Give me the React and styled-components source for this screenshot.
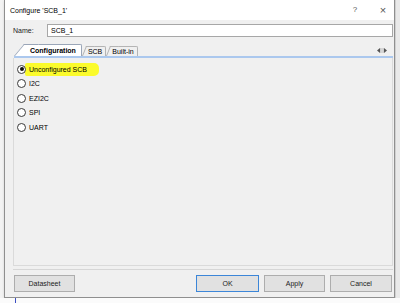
import React from 'react';
import styled, { createGlobalStyle } from 'styled-components';

const GlobalStyle = createGlobalStyle`
  html, body {
    margin: 0;
    padding: 0;
    background: #f6f6f6;
  }
  body {
    font-family: "Liberation Sans", Arial, sans-serif;
    font-size: 7px;
    color: #000;
  }
`;

const Page = styled.div`
  width: 400px;
  height: 303px;
  display: flex;
  flex-direction: column;
  overflow: hidden;
`;

const Stage = styled.div`
  display: flex;
  height: 298px;
`;

const LeftEdge = styled.div`
  width: 4px;
  background: #f3f3f3;
`;

const RightEdge = styled.div`
  flex: 1;
  background: #e9e9e9;
  border-left: 1px solid #d0d0d0;
`;

const BottomEdge = styled.div`
  flex: 1;
  background: #fbfbfb;
  padding-left: 15px;
`;

const BlueLine = styled.div`
  width: 1px;
  height: 100%;
  background: #3b4fc4;
`;

const Dialog = styled.div`
  width: 389px;
  display: flex;
  flex-direction: column;
  border: 1px solid #8f8f8f;
  border-top: none;
  box-shadow: 1px 1px 3px rgba(0, 0, 0, 0.25);
`;

const TitleBar = styled.div`
  height: 20px;
  background: #fff;
  display: flex;
  align-items: center;
  padding-left: 5px;
`;

const Title = styled.span`
  flex: 1;
  font-size: 7px;
`;

const TitleButton = styled.span`
  width: ${(p) => p.$w}px;
  margin-left: ${(p) => p.$gap || 0}px;
  text-align: center;
  font-size: ${(p) => p.$size}px;
  color: #555;
  line-height: 20px;
`;

const Body = styled.div`
  flex: 1;
  background: #f0f0f0;
  display: flex;
  flex-direction: column;
  padding: 4px 1px 0 8px;
`;

const NameRow = styled.div`
  display: flex;
  align-items: center;
  height: 13px;
`;

const Label = styled.span`
  width: 34px;
  color: #222;
`;

const Input = styled.div`
  flex: 1;
  height: 13px;
  box-sizing: border-box;
  border: 1px solid #a7a7a7;
  background: #fff;
  padding-left: 3px;
  display: flex;
  align-items: center;
`;

const TabStrip = styled.div`
  margin-top: 7px;
  height: 12px;
  display: flex;
  align-items: flex-end;
  padding-left: ${(p) => p.$indent}px;
`;

const Tab = styled.div`
  position: relative;
  z-index: 0;
  height: ${(p) => (p.$active ? 12 : 10)}px;
  box-sizing: border-box;
  display: flex;
  align-items: center;
  margin-left: ${(p) => p.$slant}px;
  padding: ${(p) => (p.$active ? '0 5px 0 6px' : '0 3px 0 2px')};
  background: ${(p) => (p.$active ? '#fff' : '#f0f0f0')};
  border-top: 1px solid ${(p) => (p.$active ? '#9aa6b8' : '#b4b4b4')};
  border-right: 1px solid ${(p) => (p.$active ? '#9aa6b8' : '#b4b4b4')};
  border-top-right-radius: 2px;
  font-weight: ${(p) => (p.$active ? 700 : 400)};

  &::before {
    content: '';
    position: absolute;
    z-index: -1;
    left: ${(p) => -p.$slant}px;
    top: -1px;
    bottom: 0;
    width: ${(p) => p.$slant + 4}px;
    background: inherit;
    border-left: 1px solid ${(p) => (p.$active ? '#9aa6b8' : '#b4b4b4')};
    border-top: 1px solid ${(p) => (p.$active ? '#9aa6b8' : '#b4b4b4')};
    transform-origin: bottom left;
    transform: skewX(${(p) => -Math.atan(p.$slant / (p.$active ? 12 : 10)) * 57.3}deg);
  }
`;

const TabArrows = styled.div`
  margin-left: auto;
  margin-right: 6px;
  margin-bottom: 3px;
  display: flex;
`;

const TabLine = styled.div`
  height: 2px;
  background: #abc8ee;
  margin-left: 1px;
`;

const Panel = styled.div`
  flex: 1;
  border: 1px solid #dadada;
  border-top: none;
  padding: 4px 0 0 3px;
  display: flex;
  flex-direction: column;
`;

const RadioRow = styled.div`
  height: 14.5px;
  display: flex;
  align-items: center;
`;

const RadioCircle = styled.span`
  position: relative;
  z-index: 1;
  width: 9px;
  height: 9px;
  box-sizing: border-box;
  border-radius: 50%;
  border: 1px solid #3a3a3a;
  background: #fff;
  display: flex;
  align-items: center;
  justify-content: center;

  &::after {
    content: '';
    width: 4px;
    height: 4px;
    border-radius: 50%;
    background: ${(p) => (p.$checked ? '#111' : 'transparent')};
  }
`;

const RadioLabel = styled.span`
  margin-left: ${(p) => (p.$marked ? -1 : 3)}px;
  padding: ${(p) => (p.$marked ? '3px 12px 3px 4px' : '0')};
  background: ${(p) => (p.$marked ? '#fbfb2c' : 'transparent')};
  border-radius: 2px 5px 5px 2px;
`;

const Footer = styled.div`
  margin-top: 3px;
  border-top: 1px solid #d6d6d6;
  padding: 5px 1px 5px 1px;
  display: flex;
  justify-content: space-between;
`;

const ButtonGroup = styled.div`
  display: flex;
  gap: 5px;
`;

const Button = styled.div`
  width: ${(p) => p.$w || 62}px;
  height: 17px;
  box-sizing: border-box;
  background: #e1e1e1;
  border: 1px solid ${(p) => (p.$primary ? '#3c86d8' : '#adadad')};
  display: flex;
  align-items: center;
  justify-content: center;
  color: #222;
`;

const options = ['Unconfigured SCB', 'I2C', 'EZI2C', 'SPI', 'UART'];

const App = () => {
  return (
    <>
      <GlobalStyle />
      <Page>
        <Stage>
          <LeftEdge />
          <Dialog>
            <TitleBar>
              <Title>Configure 'SCB_1'</Title>
              <TitleButton $w={26} $size={8}>?</TitleButton>
              <TitleButton $w={22} $gap={4} $size={11}>×</TitleButton>
            </TitleBar>
            <Body>
              <NameRow>
                <Label>Name:</Label>
                <Input>SCB_1</Input>
              </NameRow>
              <TabStrip $indent={1}>
                <Tab $active $slant={10}>Configuration</Tab>
                <Tab $slant={4}>SCB</Tab>
                <Tab $slant={4}>Built-in</Tab>
                <TabArrows>
                  <svg width="10" height="5" viewBox="0 0 10 5">
                    <path d="M0 2.5 L3 0 L3 5 Z" fill="#555" />
                    <rect x="3.6" y="0" width="0.7" height="5" fill="#999" />
                    <rect x="5.7" y="0" width="0.7" height="5" fill="#999" />
                    <path d="M10 2.5 L7 0 L7 5 Z" fill="#555" />
                  </svg>
                </TabArrows>
              </TabStrip>
              <TabLine />
              <Panel>
                {options.map((o, i) => (
                  <RadioRow key={o}>
                    <RadioCircle $checked={i === 0} />
                    <RadioLabel $marked={i === 0}>{o}</RadioLabel>
                  </RadioRow>
                ))}
              </Panel>
              <Footer>
                <Button $w={61}>Datasheet</Button>
                <ButtonGroup>
                  <Button $w={63} $primary>OK</Button>
                  <Button $w={61}>Apply</Button>
                  <Button>Cancel</Button>
                </ButtonGroup>
              </Footer>
            </Body>
          </Dialog>
          <RightEdge />
        </Stage>
        <BottomEdge>
          <BlueLine />
        </BottomEdge>
      </Page>
    </>
  );
};

export default App;
